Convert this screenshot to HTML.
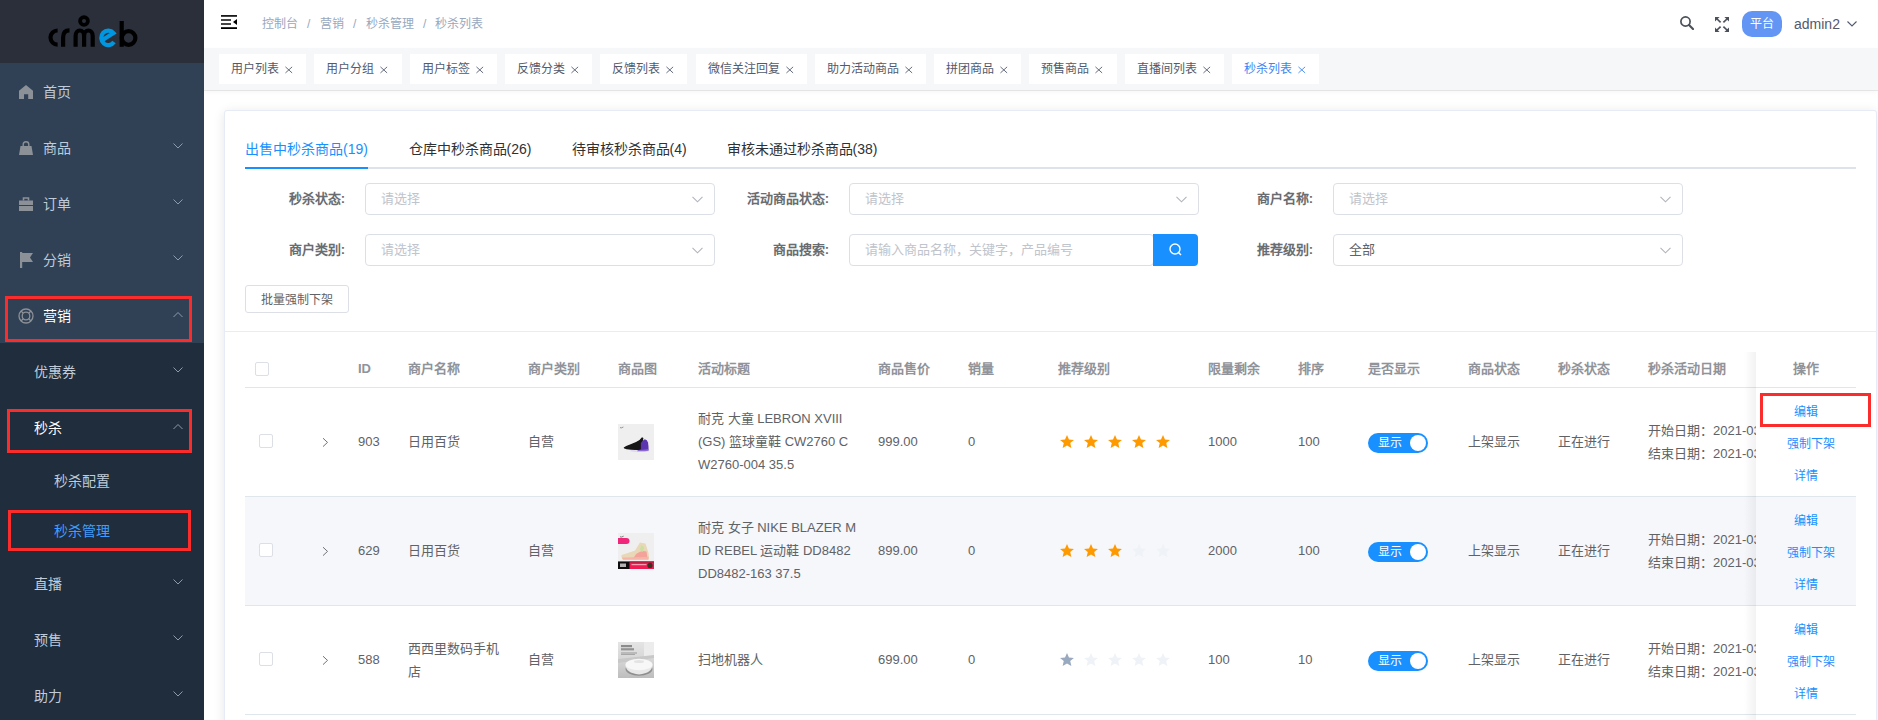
<!DOCTYPE html><html lang="zh-CN"><head><meta charset="utf-8"><title>秒杀列表</title><style>
*{box-sizing:border-box;margin:0;padding:0}
html,body{width:1878px;height:720px;overflow:hidden;background:#fff;font-family:"Liberation Sans", sans-serif;}
.a{position:absolute;white-space:nowrap}
.sb{position:absolute;left:0;top:0;width:204px;height:720px;background:#304156}
.logo{position:absolute;left:0;top:0;width:204px;height:63px;background:#2b2f3a}
.mi{position:absolute;left:0;width:204px;height:56px;color:#bfcbd9;font-size:14px}
.mi .t{position:absolute;top:1px;line-height:56px}
.sub{background:#1f2d3d}
.chev{position:absolute;left:173px;width:10px;height:6px}
.rb{position:absolute;border:3px solid #f5222d;border-color:#fb2c2c}
.hdr{position:absolute;left:204px;top:0;width:1674px;height:48px;background:#fff;box-shadow:0 1px 4px rgba(0,21,41,.08)}
.bc{font-size:12px;color:#97a8be;line-height:20px;top:14px}
.tags{position:absolute;left:204px;top:48px;width:1674px;height:42px;background:#f5f7f9;box-shadow:0 1px 0 rgba(0,0,0,.08), 0 2px 4px rgba(0,0,0,.04)}
.tag{position:absolute;top:6px;height:30px;background:#fff;font-size:12px;color:#515a6e;line-height:31px;padding-left:12px}
.tag .x{position:absolute;top:10px;width:8px;height:8px}
.card{position:absolute;left:224px;top:110px;width:1653px;height:640px;border:1px solid #e6ebf5;border-radius:3px;background:#fff;box-shadow:0 2px 12px 0 rgba(0,0,0,.1)}
.tab{font-size:14px;line-height:20px;top:139px;color:#303133}
.lbl{font-size:13px;font-weight:bold;color:#696c71;line-height:20px}
.sel{position:absolute;width:350px;height:32px;border:1px solid #dcdfe6;border-radius:4px;background:#fff}
.ph{position:absolute;left:15px;top:5.4px;font-size:13px;line-height:20px;color:#c0c4cc;white-space:nowrap}
.th{font-size:13px;font-weight:bold;color:#909399;line-height:20px;top:359px}
.td{font-size:13px;color:#606266;line-height:23px}
.cb{position:absolute;width:14px;height:14px;border:1px solid #dcdfe6;border-radius:2px;background:#fff}
.op{font-size:12px;color:#1890ff;line-height:16px}
</style></head><body>
<div class="sb">
<div class="logo"><svg width="204" height="63" style="position:absolute;left:0;top:0"><g fill="none" stroke="#000" stroke-width="4.2"><path d="M57.6 30.5 A7.1 7.1 0 0 0 57.6 44.7"/><path d="M63.1 46.8 V37.5 Q63.1 30.4 69.5 30.4"/><path d="M75.6 46.8 V36 A4.25 5.5 0 0 1 84.1 36 V46.8 M84.1 36 A4.3 5.5 0 0 1 92.7 36 V46.8"/><circle cx="84" cy="21" r="3.9" stroke-width="3.8"/><path d="M121.7 21 V46.8"/><circle cx="128.6" cy="38" r="6.8"/></g><g fill="none" stroke="#0096e0" stroke-width="4.2"><path d="M114 42 A7 7.3 0 1 1 113.5 33 L101 41"/></g></svg></div>
<div class="mi" style="top:63px;color:#bfcbd9"><span class="t" style="left:43px">首页</span>
</div>
<svg class="a" style="left:19px;top:85px" width="14" height="14" viewBox="0 0 14 14"><path d="M7 0 L14 5.8 V14 H9.2 V9.2 H5 V14 H0 V5.8 Z" fill="#8c9097"/></svg>
<div class="mi" style="top:119px;color:#bfcbd9"><span class="t" style="left:43px">商品</span>
<svg class="chev" style="top:24px" viewBox="0 0 10 6"><path d="M0.5 0.5 L5 5 L9.5 0.5" fill="none" stroke="#8d9aab" stroke-width="1"/></svg>
</div>
<svg class="a" style="left:19px;top:141px" width="14" height="14" viewBox="0 0 14 14"><path d="M1.5 5 H12.5 L14 14 H0 Z" fill="#8c9097"/><path d="M4.2 6 V3.5 A2.8 2.8 0 0 1 9.8 3.5 V6" fill="none" stroke="#8c9097" stroke-width="1.4"/></svg>
<div class="mi" style="top:175px;color:#bfcbd9"><span class="t" style="left:43px">订单</span>
<svg class="chev" style="top:24px" viewBox="0 0 10 6"><path d="M0.5 0.5 L5 5 L9.5 0.5" fill="none" stroke="#8d9aab" stroke-width="1"/></svg>
</div>
<svg class="a" style="left:19px;top:197px" width="14" height="14" viewBox="0 0 14 14"><rect x="0" y="3.5" width="14" height="4.5" fill="#8c9097"/><rect x="0" y="9" width="14" height="5" fill="#8c9097"/><path d="M4.5 3.5 V1 H9.5 V3.5" fill="none" stroke="#8c9097" stroke-width="1.6"/></svg>
<div class="mi" style="top:231px;color:#bfcbd9"><span class="t" style="left:43px">分销</span>
<svg class="chev" style="top:24px" viewBox="0 0 10 6"><path d="M0.5 0.5 L5 5 L9.5 0.5" fill="none" stroke="#8d9aab" stroke-width="1"/></svg>
</div>
<svg class="a" style="left:20px;top:252px" width="13" height="16" viewBox="0 0 13 16"><rect x="0" y="0" width="2.2" height="16" fill="#8c9097"/><path d="M2 1 H13 L10 5.5 L13 10 H2 Z" fill="#8c9097"/></svg>
<div class="mi" style="top:287px;color:#fff"><span class="t" style="left:43px">营销</span>
<svg class="chev" style="top:25px" viewBox="0 0 10 6"><path d="M0.5 5 L5 0.5 L9.5 5" fill="none" stroke="#8d9aab" stroke-width="1"/></svg>
</div>
<svg class="a" style="left:18px;top:308px" width="16" height="16" viewBox="0 0 16 16"><circle cx="8" cy="8" r="7" fill="none" stroke="#8c9097" stroke-width="1.3"/><circle cx="8" cy="8" r="3.8" fill="none" stroke="#8c9097" stroke-width="1.3"/><path d="M3 3 L5.3 5.3 M13 3 L10.7 5.3 M3 13 L5.3 10.7 M13 13 L10.7 10.7" stroke="#8c9097" stroke-width="1.3"/></svg>
<div class="a sub" style="left:0;top:343px;width:204px;height:377px"></div>
<div class="mi" style="top:343px;height:56px;color:#bfcbd9"><span class="t" style="left:34px;line-height:56px">优惠券</span>
<svg class="chev" style="top:24px" viewBox="0 0 10 6"><path d="M0.5 0.5 L5 5 L9.5 0.5" fill="none" stroke="#8d9aab" stroke-width="1"/></svg>
</div>
<div class="mi" style="top:399px;height:56px;color:#fff"><span class="t" style="left:34px;line-height:56px">秒杀</span>
<svg class="chev" style="top:25px" viewBox="0 0 10 6"><path d="M0.5 5 L5 0.5 L9.5 5" fill="none" stroke="#8d9aab" stroke-width="1"/></svg>
</div>
<div class="mi" style="top:455px;height:50px;color:#bfcbd9"><span class="t" style="left:54px;line-height:50px">秒杀配置</span>
</div>
<div class="mi" style="top:505px;height:50px;color:#409eff"><span class="t" style="left:54px;line-height:50px">秒杀管理</span>
</div>
<div class="mi" style="top:555px;height:56px;color:#bfcbd9"><span class="t" style="left:34px;line-height:56px">直播</span>
<svg class="chev" style="top:24px" viewBox="0 0 10 6"><path d="M0.5 0.5 L5 5 L9.5 0.5" fill="none" stroke="#8d9aab" stroke-width="1"/></svg>
</div>
<div class="mi" style="top:611px;height:56px;color:#bfcbd9"><span class="t" style="left:34px;line-height:56px">预售</span>
<svg class="chev" style="top:24px" viewBox="0 0 10 6"><path d="M0.5 0.5 L5 5 L9.5 0.5" fill="none" stroke="#8d9aab" stroke-width="1"/></svg>
</div>
<div class="mi" style="top:667px;height:56px;color:#bfcbd9"><span class="t" style="left:34px;line-height:56px">助力</span>
<svg class="chev" style="top:24px" viewBox="0 0 10 6"><path d="M0.5 0.5 L5 5 L9.5 0.5" fill="none" stroke="#8d9aab" stroke-width="1"/></svg>
</div>
<div class="rb" style="left:5px;top:296px;width:187px;height:46px"></div>
<div class="rb" style="left:7px;top:409px;width:185px;height:44px"></div>
<div class="rb" style="left:8px;top:510px;width:183px;height:41px"></div>
</div>
<div class="hdr"></div>
<svg class="a" style="left:221px;top:15px" width="16" height="14" viewBox="0 0 16 14"><rect x="0" y="0" width="16" height="1.8" fill="#1a1a1a"/><rect x="0" y="4.2" width="10" height="1.6" fill="#1a1a1a"/><rect x="0" y="8.2" width="10" height="1.6" fill="#1a1a1a"/><rect x="0" y="12.2" width="16" height="1.8" fill="#000"/><path d="M16 4 L12 7 L16 10 Z" fill="#000"/></svg>
<div class="a bc" style="left:262px">控制台</div>
<div class="a bc" style="left:307px">/</div>
<div class="a bc" style="left:320px">营销</div>
<div class="a bc" style="left:353px">/</div>
<div class="a bc" style="left:366px">秒杀管理</div>
<div class="a bc" style="left:423px">/</div>
<div class="a bc" style="left:435px">秒杀列表</div>
<svg class="a" style="left:1680px;top:16px" width="14" height="14" viewBox="0 0 14 14"><circle cx="5.5" cy="5.5" r="4.6" fill="none" stroke="#4b505a" stroke-width="1.7"/><path d="M9 9 L13 13" stroke="#4b505a" stroke-width="2.1" stroke-linecap="round"/></svg>
<svg class="a" style="left:1715px;top:17px" width="14" height="15" viewBox="0 0 14 15"><g fill="#4b505a"><path d="M0 0 H4.6 L0 4.6 Z"/><path d="M14 0 H9.4 L14 4.6 Z"/><path d="M0 15 H4.6 L0 10.4 Z"/><path d="M14 15 H9.4 L14 10.4 Z"/></g><g stroke="#4b505a" stroke-width="1.7"><path d="M1.5 1.5 L5.6 5.3"/><path d="M12.5 1.5 L8.4 5.3"/><path d="M1.5 13.5 L5.6 9.7"/><path d="M12.5 13.5 L8.4 9.7"/></g></svg>
<div class="a" style="left:1742px;top:11px;width:40px;height:26px;border-radius:10px;background:#6395f4;color:#fff;font-size:12px;line-height:26px;text-align:center">平台</div>
<div class="a" style="left:1794px;top:14px;font-size:14px;line-height:20px;color:#515a6e">admin2</div>
<svg class="a" style="left:1847px;top:21px" width="10" height="6" viewBox="0 0 10 6"><path d="M0.5 0.5 L5 5 L9.5 0.5" fill="none" stroke="#515a6e" stroke-width="1.1"/></svg>
<div class="tags"></div>
<div class="a tag" style="left:219px;top:54px;width:87.3px;color:#515a6e">用户列表<svg class="x" style="left:66px;top:11.6px" width="9" height="8" viewBox="0 0 9 8"><path d="M0.5 0.5 L8 7.3 M8 0.5 L0.5 7.3" stroke="#515a6e" stroke-width="1"/></svg></div>
<div class="a tag" style="left:314.3px;top:54px;width:87.3px;color:#515a6e">用户分组<svg class="x" style="left:66px;top:11.6px" width="9" height="8" viewBox="0 0 9 8"><path d="M0.5 0.5 L8 7.3 M8 0.5 L0.5 7.3" stroke="#515a6e" stroke-width="1"/></svg></div>
<div class="a tag" style="left:409.6px;top:54px;width:87.3px;color:#515a6e">用户标签<svg class="x" style="left:66px;top:11.6px" width="9" height="8" viewBox="0 0 9 8"><path d="M0.5 0.5 L8 7.3 M8 0.5 L0.5 7.3" stroke="#515a6e" stroke-width="1"/></svg></div>
<div class="a tag" style="left:504.90000000000003px;top:54px;width:87.3px;color:#515a6e">反馈分类<svg class="x" style="left:66px;top:11.6px" width="9" height="8" viewBox="0 0 9 8"><path d="M0.5 0.5 L8 7.3 M8 0.5 L0.5 7.3" stroke="#515a6e" stroke-width="1"/></svg></div>
<div class="a tag" style="left:600.2px;top:54px;width:87.3px;color:#515a6e">反馈列表<svg class="x" style="left:66px;top:11.6px" width="9" height="8" viewBox="0 0 9 8"><path d="M0.5 0.5 L8 7.3 M8 0.5 L0.5 7.3" stroke="#515a6e" stroke-width="1"/></svg></div>
<div class="a tag" style="left:695.5px;top:54px;width:111.3px;color:#515a6e">微信关注回复<svg class="x" style="left:90px;top:11.6px" width="9" height="8" viewBox="0 0 9 8"><path d="M0.5 0.5 L8 7.3 M8 0.5 L0.5 7.3" stroke="#515a6e" stroke-width="1"/></svg></div>
<div class="a tag" style="left:814.8px;top:54px;width:111.3px;color:#515a6e">助力活动商品<svg class="x" style="left:90px;top:11.6px" width="9" height="8" viewBox="0 0 9 8"><path d="M0.5 0.5 L8 7.3 M8 0.5 L0.5 7.3" stroke="#515a6e" stroke-width="1"/></svg></div>
<div class="a tag" style="left:934.0999999999999px;top:54px;width:87.3px;color:#515a6e">拼团商品<svg class="x" style="left:66px;top:11.6px" width="9" height="8" viewBox="0 0 9 8"><path d="M0.5 0.5 L8 7.3 M8 0.5 L0.5 7.3" stroke="#515a6e" stroke-width="1"/></svg></div>
<div class="a tag" style="left:1029.3999999999999px;top:54px;width:87.3px;color:#515a6e">预售商品<svg class="x" style="left:66px;top:11.6px" width="9" height="8" viewBox="0 0 9 8"><path d="M0.5 0.5 L8 7.3 M8 0.5 L0.5 7.3" stroke="#515a6e" stroke-width="1"/></svg></div>
<div class="a tag" style="left:1124.6999999999998px;top:54px;width:99.3px;color:#515a6e">直播间列表<svg class="x" style="left:78px;top:11.6px" width="9" height="8" viewBox="0 0 9 8"><path d="M0.5 0.5 L8 7.3 M8 0.5 L0.5 7.3" stroke="#515a6e" stroke-width="1"/></svg></div>
<div class="a tag" style="left:1231.9999999999998px;top:54px;width:87.3px;color:#3d87f2">秒杀列表<svg class="x" style="left:66px;top:11.6px" width="9" height="8" viewBox="0 0 9 8"><path d="M0.5 0.5 L8 7.3 M8 0.5 L0.5 7.3" stroke="#3d87f2" stroke-width="1"/></svg></div>
<div class="card"></div>
<div class="a" style="left:245px;top:167px;width:1611px;height:2px;background:#dfe2ea"></div>
<div class="a" style="left:245px;top:167px;width:123px;height:2px;background:#1890ff"></div>
<div class="a tab" style="left:245px;color:#1890ff">出售中秒杀商品(19)</div>
<div class="a tab" style="left:408.5px;color:#303133">仓库中秒杀商品(26)</div>
<div class="a tab" style="left:571.5px;color:#303133">待审核秒杀商品(4)</div>
<div class="a tab" style="left:726.5px;color:#303133">审核未通过秒杀商品(38)</div>
<div class="a lbl" style="left:141px;width:204px;text-align:right;top:189px">秒杀状态:</div>
<div class="a lbl" style="left:625px;width:204px;text-align:right;top:189px">活动商品状态:</div>
<div class="a lbl" style="left:1109px;width:204px;text-align:right;top:189px">商户名称:</div>
<div class="a lbl" style="left:141px;width:204px;text-align:right;top:240px">商户类别:</div>
<div class="a lbl" style="left:625px;width:204px;text-align:right;top:240px">商品搜索:</div>
<div class="a lbl" style="left:1109px;width:204px;text-align:right;top:240px">推荐级别:</div>
<div class="sel" style="left:365px;top:183px;width:350px"><span class="ph" style="color:#c0c4cc">请选择</span><svg class="a" style="left:325.5px;top:12.4px" width="11" height="7" viewBox="0 0 11 7"><path d="M0.5 0.8 L5.5 5.8 L10.5 0.8" fill="none" stroke="#b0b4bc" stroke-width="1.1"/></svg></div>
<div class="sel" style="left:849px;top:183px;width:350px"><span class="ph" style="color:#c0c4cc">请选择</span><svg class="a" style="left:325.5px;top:12.4px" width="11" height="7" viewBox="0 0 11 7"><path d="M0.5 0.8 L5.5 5.8 L10.5 0.8" fill="none" stroke="#b0b4bc" stroke-width="1.1"/></svg></div>
<div class="sel" style="left:1333px;top:183px;width:350px"><span class="ph" style="color:#c0c4cc">请选择</span><svg class="a" style="left:325.5px;top:12.4px" width="11" height="7" viewBox="0 0 11 7"><path d="M0.5 0.8 L5.5 5.8 L10.5 0.8" fill="none" stroke="#b0b4bc" stroke-width="1.1"/></svg></div>
<div class="sel" style="left:365px;top:234px;width:350px"><span class="ph" style="color:#c0c4cc">请选择</span><svg class="a" style="left:325.5px;top:12.4px" width="11" height="7" viewBox="0 0 11 7"><path d="M0.5 0.8 L5.5 5.8 L10.5 0.8" fill="none" stroke="#b0b4bc" stroke-width="1.1"/></svg></div>
<div class="sel" style="left:849px;top:234px;width:305px"><span class="ph" style="color:#c0c4cc">请输入商品名称，关键字，产品编号</span></div>
<div class="a" style="left:1153px;top:234px;width:45px;height:32px;background:#1890ff;border-radius:0 4px 4px 0"></div>
<svg class="a" style="left:1169px;top:243px" width="13" height="13" viewBox="0 0 13 13"><circle cx="6" cy="6" r="5" fill="none" stroke="#fff" stroke-width="1.4"/><path d="M9.5 9.5 L12 12" stroke="#fff" stroke-width="1.4"/></svg>
<div class="sel" style="left:1333px;top:234px;width:350px"><span class="ph" style="color:#606266">全部</span><svg class="a" style="left:325.5px;top:12.4px" width="11" height="7" viewBox="0 0 11 7"><path d="M0.5 0.8 L5.5 5.8 L10.5 0.8" fill="none" stroke="#b0b4bc" stroke-width="1.1"/></svg></div>
<div class="a" style="left:245px;top:285px;width:104px;height:28px;border:1px solid #dcdfe6;border-radius:3px;font-size:12px;line-height:28px;color:#606266;text-align:center">批量强制下架</div>
<div class="a" style="left:225px;top:331px;width:1651px;height:1px;background:#e8ecf3"></div>
<div class="cb" style="left:255px;top:362px"></div>
<div class="a th" style="left:358px">ID</div>
<div class="a th" style="left:408px">商户名称</div>
<div class="a th" style="left:528px">商户类别</div>
<div class="a th" style="left:618px">商品图</div>
<div class="a th" style="left:698px">活动标题</div>
<div class="a th" style="left:878px">商品售价</div>
<div class="a th" style="left:968px">销量</div>
<div class="a th" style="left:1058px">推荐级别</div>
<div class="a th" style="left:1208px">限量剩余</div>
<div class="a th" style="left:1298px">排序</div>
<div class="a th" style="left:1368px">是否显示</div>
<div class="a th" style="left:1468px">商品状态</div>
<div class="a th" style="left:1558px">秒杀状态</div>
<div class="a th" style="left:1648px">秒杀活动日期</div>
<div class="a" style="left:245px;top:387px;width:1611px;height:1px;background:#dfe6ec"></div>
<div class="a" style="left:245px;top:496px;width:1611px;height:1px;background:#dfe6ec"></div>
<div class="cb" style="left:259px;top:434px"></div>
<svg class="a" style="left:322px;top:437px" width="7" height="10" viewBox="0 0 7 10"><path d="M1 1.2 L5.5 5.4 L1 9.6" fill="none" stroke="#606266" stroke-width="0.9"/></svg>
<div class="a td" style="left:358px;top:430.0px">903</div>
<div class="a td" style="left:408px;top:430.0px">日用百货</div>
<div class="a td" style="left:528px;top:430.0px">自营</div>
<svg class="a" style="left:618px;top:424px" width="36" height="36" viewBox="0 0 36 36"><defs><filter id="bl1" x="-10%" y="-10%" width="120%" height="120%"><feGaussianBlur stdDeviation="0.4"/></filter></defs><rect width="36" height="36" fill="#efefef"/><g filter="url(#bl1)"><path d="M2 3.6 Q3.2 4.4 5.4 3" stroke="#555" stroke-width="0.6" fill="none"/><path d="M13 25.8 Q21 27.4 30.6 25.6 L30.8 27.4 Q21 28.8 12 27.2 Z" fill="#e0d8f2"/><path d="M5.8 23.6 Q7.5 21.8 12 20.4 Q18 18.6 21.5 16 Q23 14.4 24 13.3 L25.4 14 L24.6 18.5 L23.8 25.8 Q15 26.4 8.6 25.2 Q5.4 24.8 5.8 23.6 Z" fill="#131317"/><path d="M22.8 19 Q24.5 16.2 26.8 15.2 Q29.2 15.4 30 18.5 Q30.6 22 30.6 25.8 L22.8 26.4 Z" fill="#5b34b0"/><path d="M20 26 Q25 25.6 30.6 25.2 L30.6 26.8 Q25 27.6 19 27.2 Z" fill="#8a6ad0"/></g></svg>
<div class="a td" style="left:698px;top:407.0px">耐克 大童 LEBRON XVIII<br>(GS) 篮球童鞋 CW2760 C<br>W2760-004 35.5</div>
<div class="a td" style="left:878px;top:430.0px">999.00</div>
<div class="a td" style="left:968px;top:430.0px">0</div>
<svg class="a" style="left:1060px;top:434.5px" width="14" height="13" viewBox="0 0 13.4 12.5" fill="#ff9900"><path d="M6.7 0 L8.6 4.3 L13.4 4.7 L9.8 7.8 L10.9 12.5 L6.7 10 L2.5 12.5 L3.6 7.8 L0 4.7 L4.8 4.3 Z"/></svg>
<svg class="a" style="left:1084px;top:434.5px" width="14" height="13" viewBox="0 0 13.4 12.5" fill="#ff9900"><path d="M6.7 0 L8.6 4.3 L13.4 4.7 L9.8 7.8 L10.9 12.5 L6.7 10 L2.5 12.5 L3.6 7.8 L0 4.7 L4.8 4.3 Z"/></svg>
<svg class="a" style="left:1108px;top:434.5px" width="14" height="13" viewBox="0 0 13.4 12.5" fill="#ff9900"><path d="M6.7 0 L8.6 4.3 L13.4 4.7 L9.8 7.8 L10.9 12.5 L6.7 10 L2.5 12.5 L3.6 7.8 L0 4.7 L4.8 4.3 Z"/></svg>
<svg class="a" style="left:1132px;top:434.5px" width="14" height="13" viewBox="0 0 13.4 12.5" fill="#ff9900"><path d="M6.7 0 L8.6 4.3 L13.4 4.7 L9.8 7.8 L10.9 12.5 L6.7 10 L2.5 12.5 L3.6 7.8 L0 4.7 L4.8 4.3 Z"/></svg>
<svg class="a" style="left:1156px;top:434.5px" width="14" height="13" viewBox="0 0 13.4 12.5" fill="#ff9900"><path d="M6.7 0 L8.6 4.3 L13.4 4.7 L9.8 7.8 L10.9 12.5 L6.7 10 L2.5 12.5 L3.6 7.8 L0 4.7 L4.8 4.3 Z"/></svg>
<div class="a td" style="left:1208px;top:430.0px">1000</div>
<div class="a td" style="left:1298px;top:430.0px">100</div>
<div class="a" style="left:1368px;top:433px;width:60px;height:20px;border-radius:10px;background:#1890ff"></div>
<div class="a" style="left:1410px;top:435px;width:16px;height:16px;border-radius:8px;background:#fff"></div>
<div class="a" style="left:1378px;top:433px;font-size:12px;line-height:20px;color:#fff">显示</div>
<div class="a td" style="left:1468px;top:430.0px">上架显示</div>
<div class="a td" style="left:1558px;top:430.0px">正在进行</div>
<div class="a td" style="left:1648px;top:418.5px;width:108px;overflow:hidden">开始日期：2021-03-18<br>结束日期：2021-03-31</div>
<div class="a" style="left:245px;top:497px;width:1611px;height:108px;background:#f5f7fa"></div>
<div class="a" style="left:245px;top:605px;width:1611px;height:1px;background:#dfe6ec"></div>
<div class="cb" style="left:259px;top:543px"></div>
<svg class="a" style="left:322px;top:546px" width="7" height="10" viewBox="0 0 7 10"><path d="M1 1.2 L5.5 5.4 L1 9.6" fill="none" stroke="#606266" stroke-width="0.9"/></svg>
<div class="a td" style="left:358px;top:539.0px">629</div>
<div class="a td" style="left:408px;top:539.0px">日用百货</div>
<div class="a td" style="left:528px;top:539.0px">自营</div>
<svg class="a" style="left:618px;top:533px" width="36" height="36" viewBox="0 0 36 36"><defs><filter id="bl2" x="-10%" y="-10%" width="120%" height="120%"><feGaussianBlur stdDeviation="0.35"/></filter></defs><rect width="36" height="36" fill="#efefef"/><g filter="url(#bl2)"><path d="M2 3.8 Q3.5 4.6 5.6 3.2" stroke="#444" stroke-width="0.7" fill="none"/><path d="M0 5 H8.5 A3 3 0 0 1 8.5 11 H0 Z" fill="#f0267a"/><path d="M3.5 22 Q10 20 17 17.5 L22 9.5 L27.5 10.5 L30.5 20 Q31.5 24.5 30.5 26.5 L4.5 26.5 Q3 24.5 3.5 22 Z" fill="#e9d8b8"/><path d="M18 21 Q24 16.5 28.5 18.5 L29.5 25 L15.5 25 Z" fill="#f4a39a"/><path d="M23 12 L26 14 L25 19 L22 17 Z" fill="#c9e0a0"/><path d="M4 24.5 L30.5 24 L30.5 26.8 L5 26.8 Z" fill="#f6b5a6"/><rect x="0" y="28.4" width="36" height="7.6" fill="#0e0e0e"/><rect x="11.5" y="29.2" width="24.5" height="6.8" fill="#ee1f52"/><circle cx="32" cy="32.4" r="2.6" fill="#3a3020"/><rect x="2" y="30.5" width="6" height="3.5" fill="#dddddd" opacity="0.8"/><rect x="13.5" y="31" width="15" height="1.2" fill="#ffd0dc" opacity="0.7"/></g></svg>
<div class="a td" style="left:698px;top:516.0px">耐克 女子 NIKE BLAZER M<br>ID REBEL 运动鞋 DD8482<br>DD8482-163 37.5</div>
<div class="a td" style="left:878px;top:539.0px">899.00</div>
<div class="a td" style="left:968px;top:539.0px">0</div>
<svg class="a" style="left:1060px;top:543.5px" width="14" height="13" viewBox="0 0 13.4 12.5" fill="#ff9900"><path d="M6.7 0 L8.6 4.3 L13.4 4.7 L9.8 7.8 L10.9 12.5 L6.7 10 L2.5 12.5 L3.6 7.8 L0 4.7 L4.8 4.3 Z"/></svg>
<svg class="a" style="left:1084px;top:543.5px" width="14" height="13" viewBox="0 0 13.4 12.5" fill="#ff9900"><path d="M6.7 0 L8.6 4.3 L13.4 4.7 L9.8 7.8 L10.9 12.5 L6.7 10 L2.5 12.5 L3.6 7.8 L0 4.7 L4.8 4.3 Z"/></svg>
<svg class="a" style="left:1108px;top:543.5px" width="14" height="13" viewBox="0 0 13.4 12.5" fill="#ff9900"><path d="M6.7 0 L8.6 4.3 L13.4 4.7 L9.8 7.8 L10.9 12.5 L6.7 10 L2.5 12.5 L3.6 7.8 L0 4.7 L4.8 4.3 Z"/></svg>
<svg class="a" style="left:1132px;top:543.5px" width="14" height="13" viewBox="0 0 13.4 12.5" fill="#eff2f7"><path d="M6.7 0 L8.6 4.3 L13.4 4.7 L9.8 7.8 L10.9 12.5 L6.7 10 L2.5 12.5 L3.6 7.8 L0 4.7 L4.8 4.3 Z"/></svg>
<svg class="a" style="left:1156px;top:543.5px" width="14" height="13" viewBox="0 0 13.4 12.5" fill="#eff2f7"><path d="M6.7 0 L8.6 4.3 L13.4 4.7 L9.8 7.8 L10.9 12.5 L6.7 10 L2.5 12.5 L3.6 7.8 L0 4.7 L4.8 4.3 Z"/></svg>
<div class="a td" style="left:1208px;top:539.0px">2000</div>
<div class="a td" style="left:1298px;top:539.0px">100</div>
<div class="a" style="left:1368px;top:542px;width:60px;height:20px;border-radius:10px;background:#1890ff"></div>
<div class="a" style="left:1410px;top:544px;width:16px;height:16px;border-radius:8px;background:#fff"></div>
<div class="a" style="left:1378px;top:542px;font-size:12px;line-height:20px;color:#fff">显示</div>
<div class="a td" style="left:1468px;top:539.0px">上架显示</div>
<div class="a td" style="left:1558px;top:539.0px">正在进行</div>
<div class="a td" style="left:1648px;top:527.5px;width:108px;overflow:hidden">开始日期：2021-03-18<br>结束日期：2021-03-31</div>
<div class="a" style="left:245px;top:714px;width:1611px;height:1px;background:#dfe6ec"></div>
<div class="cb" style="left:259px;top:652px"></div>
<svg class="a" style="left:322px;top:655px" width="7" height="10" viewBox="0 0 7 10"><path d="M1 1.2 L5.5 5.4 L1 9.6" fill="none" stroke="#606266" stroke-width="0.9"/></svg>
<div class="a td" style="left:358px;top:648.0px">588</div>
<div class="a td" style="left:408px;top:636.5px">西西里数码手机<br>店</div>
<div class="a td" style="left:528px;top:648.0px">自营</div>
<svg class="a" style="left:618px;top:642px" width="36" height="36" viewBox="0 0 36 36"><defs><linearGradient id="rg" x1="0" y1="0" x2="0" y2="1"><stop offset="0" stop-color="#e4e4e4"/><stop offset="0.5" stop-color="#d6d6d6"/><stop offset="1" stop-color="#bdbdbd"/></linearGradient><filter id="bl3" x="-10%" y="-10%" width="120%" height="120%"><feGaussianBlur stdDeviation="0.35"/></filter></defs><rect width="36" height="36" fill="url(#rg)"/><g filter="url(#bl3)"><rect x="26" y="0" width="10" height="16" fill="#ececec"/><path d="M0 17 L36 13 L36 16 L0 21 Z" fill="#c8c8c8"/><rect x="3" y="3" width="11" height="2.2" fill="#777" opacity="0.8"/><rect x="3" y="6.2" width="13" height="2.2" fill="#808080" opacity="0.8"/><rect x="3" y="10.5" width="16" height="1" fill="#9a9a9a"/><rect x="3" y="12.2" width="14" height="0.8" fill="#9a9a9a"/><ellipse cx="21" cy="27" rx="13.5" ry="6.8" fill="#5a5a5a" opacity="0.5"/><path d="M7.5 22.5 Q7.5 31 21 32.5 Q34.5 31 34.5 22.5 Z" fill="#e8e8e8"/><ellipse cx="21" cy="22.5" rx="13.5" ry="5.8" fill="#f7f7f7"/><ellipse cx="21" cy="19.5" rx="5" ry="1.5" fill="#e3e3e3"/></g></svg>
<div class="a td" style="left:698px;top:648.0px">扫地机器人</div>
<div class="a td" style="left:878px;top:648.0px">699.00</div>
<div class="a td" style="left:968px;top:648.0px">0</div>
<svg class="a" style="left:1060px;top:652.5px" width="14" height="13" viewBox="0 0 13.4 12.5" fill="#99a9bf"><path d="M6.7 0 L8.6 4.3 L13.4 4.7 L9.8 7.8 L10.9 12.5 L6.7 10 L2.5 12.5 L3.6 7.8 L0 4.7 L4.8 4.3 Z"/></svg>
<svg class="a" style="left:1084px;top:652.5px" width="14" height="13" viewBox="0 0 13.4 12.5" fill="#eff2f7"><path d="M6.7 0 L8.6 4.3 L13.4 4.7 L9.8 7.8 L10.9 12.5 L6.7 10 L2.5 12.5 L3.6 7.8 L0 4.7 L4.8 4.3 Z"/></svg>
<svg class="a" style="left:1108px;top:652.5px" width="14" height="13" viewBox="0 0 13.4 12.5" fill="#eff2f7"><path d="M6.7 0 L8.6 4.3 L13.4 4.7 L9.8 7.8 L10.9 12.5 L6.7 10 L2.5 12.5 L3.6 7.8 L0 4.7 L4.8 4.3 Z"/></svg>
<svg class="a" style="left:1132px;top:652.5px" width="14" height="13" viewBox="0 0 13.4 12.5" fill="#eff2f7"><path d="M6.7 0 L8.6 4.3 L13.4 4.7 L9.8 7.8 L10.9 12.5 L6.7 10 L2.5 12.5 L3.6 7.8 L0 4.7 L4.8 4.3 Z"/></svg>
<svg class="a" style="left:1156px;top:652.5px" width="14" height="13" viewBox="0 0 13.4 12.5" fill="#eff2f7"><path d="M6.7 0 L8.6 4.3 L13.4 4.7 L9.8 7.8 L10.9 12.5 L6.7 10 L2.5 12.5 L3.6 7.8 L0 4.7 L4.8 4.3 Z"/></svg>
<div class="a td" style="left:1208px;top:648.0px">100</div>
<div class="a td" style="left:1298px;top:648.0px">10</div>
<div class="a" style="left:1368px;top:651px;width:60px;height:20px;border-radius:10px;background:#1890ff"></div>
<div class="a" style="left:1410px;top:653px;width:16px;height:16px;border-radius:8px;background:#fff"></div>
<div class="a" style="left:1378px;top:651px;font-size:12px;line-height:20px;color:#fff">显示</div>
<div class="a td" style="left:1468px;top:648.0px">上架显示</div>
<div class="a td" style="left:1558px;top:648.0px">正在进行</div>
<div class="a td" style="left:1648px;top:636.5px;width:108px;overflow:hidden">开始日期：2021-03-18<br>结束日期：2021-03-31</div>
<div class="a" style="left:1744px;top:352px;width:12px;height:368px;background:linear-gradient(to right, rgba(0,0,0,0), rgba(0,0,0,0.05))"></div>
<div class="a" style="left:1756px;top:352px;width:100px;height:368px;background:#fff"></div>
<div class="a" style="left:1756px;top:387px;width:100px;height:1px;background:#dfe6ec"></div>
<div class="a th" style="left:1793px">操作</div>
<div class="a" style="left:1756px;top:496px;width:100px;height:1px;background:#dfe6ec"></div>
<div class="a op" style="left:1794px;top:403.5px">编辑</div>
<div class="a op" style="left:1787px;top:435.5px">强制下架</div>
<div class="a op" style="left:1794px;top:467.5px">详情</div>
<div class="a" style="left:1756px;top:497px;width:100px;height:108px;background:#f5f7fa"></div>
<div class="a" style="left:1756px;top:605px;width:100px;height:1px;background:#dfe6ec"></div>
<div class="a op" style="left:1794px;top:512.5px">编辑</div>
<div class="a op" style="left:1787px;top:544.5px">强制下架</div>
<div class="a op" style="left:1794px;top:576.5px">详情</div>
<div class="a" style="left:1756px;top:714px;width:100px;height:1px;background:#dfe6ec"></div>
<div class="a op" style="left:1794px;top:621.5px">编辑</div>
<div class="a op" style="left:1787px;top:653.5px">强制下架</div>
<div class="a op" style="left:1794px;top:685.5px">详情</div>
<div class="rb" style="left:1760px;top:393px;width:111px;height:34px"></div>
</body></html>
